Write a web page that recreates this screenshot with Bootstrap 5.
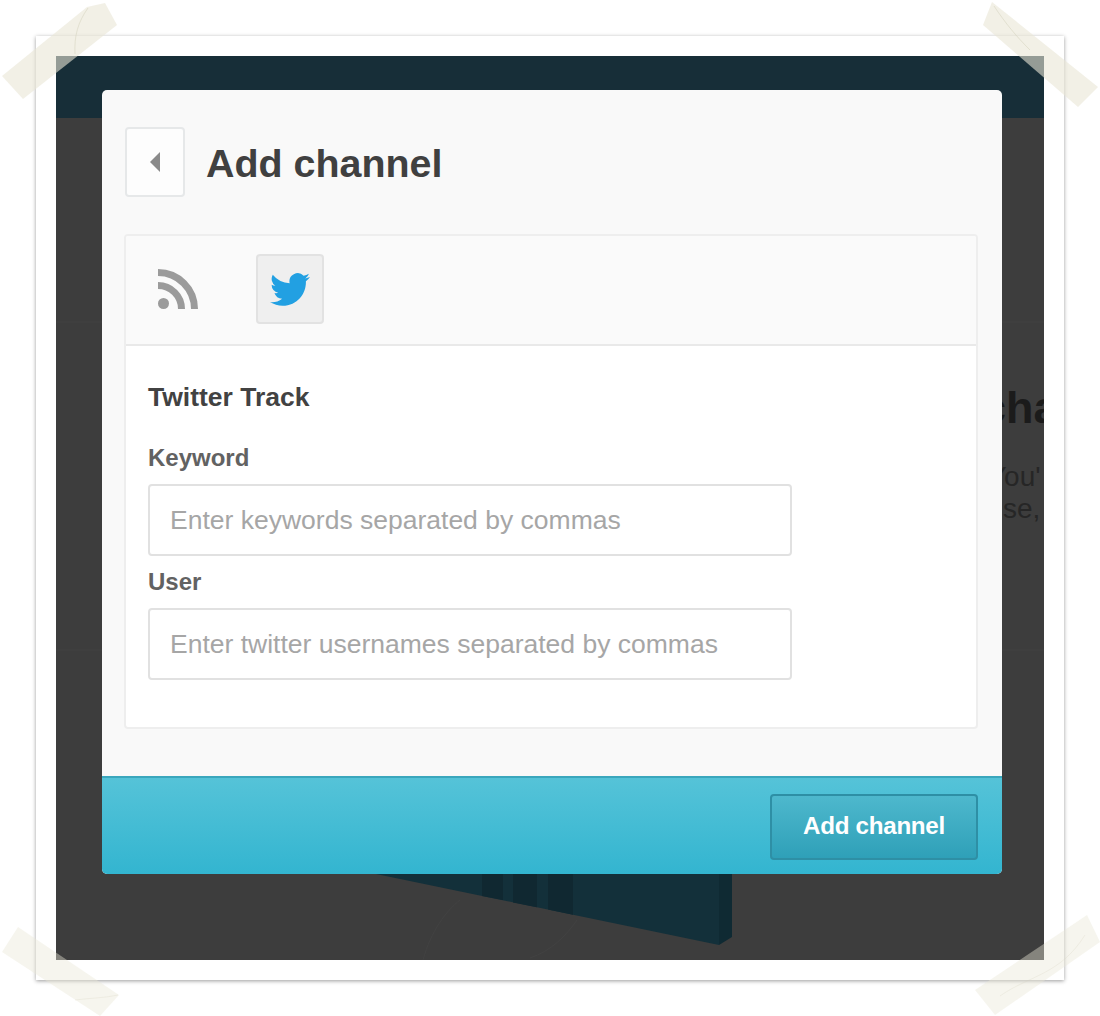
<!DOCTYPE html>
<html lang="en">
<head>
    <meta charset="UTF-8">
    <title>Add channel</title>
    <link href="https://cdn.jsdelivr.net/npm/bootstrap@5.3.0/dist/css/bootstrap.min.css" rel="stylesheet">
    <style>
        html, body { height: 100%; overflow: hidden; }
        body { background: #fff; font-family: "Liberation Sans", Arial, sans-serif; padding: 36px; }
        .photo-frame { position: relative; width: 1028px; height: 944px; padding: 20px; background: #fff; box-shadow: 0 1px 4px rgba(0,0,0,.4); }
        .photo-screen { position: relative; height: 904px; padding: 34px 42px 0 46px; background: #3d3d3d; overflow: hidden; }
        .top-strip { position: absolute; left: 0; right: 0; top: 0; height: 62px; background: #172e38; }
        .bg-art { position: absolute; left: 0; top: 0; width: 988px; height: 904px; }
        .bg-title { position: absolute; left: 925px; top: 327px; font-size: 45px; font-weight: 700; line-height: 50px; color: #1b1b1b; white-space: nowrap; }
        .bg-text { position: absolute; font-size: 28px; line-height: 32px; color: #262626; white-space: nowrap; }
        .bg-line-a { left: 932px; top: 405px; }
        .bg-line-b { left: 947px; top: 437px; }
        .dialog-box { position: relative; width: 900px; height: 784px; border: 0; border-radius: 5px; background: #f9f9f9; overflow: hidden; }
        .dialog-head { height: 144px; border: 0; padding: 37px 22px 37px 23px; gap: 21px; justify-content: flex-start; align-items: flex-start; }
        .back-btn { width: 60px; height: 70px; padding: 0; background: #fdfdfd; border: 2px solid #e6e8e9; border-radius: 4px; }
        .back-btn:hover { background: #fdfdfd; border-color: #e6e8e9; }
        .dialog-title { font-size: 39.4px; line-height: 72px; font-weight: 700; color: #404040; margin: 0; }
        .dialog-main { padding: 0 24px 0 22px; flex: none; height: 542px; }
        .channel-card { height: 495px; border: 2px solid #eeeeee; border-radius: 4px; background: #fff; }
        .channel-tabs { height: 110px; padding: 18px 0 0 18px; gap: 44px; background: #fafafa; border: 0; border-bottom: 2px solid #e9e9e9; border-radius: 2px 2px 0 0 !important; }
        .tab-item { width: 68px; height: 70px; border: 2px solid transparent; border-radius: 4px; }
        .tab-item.is-on { background: #efefef; border-color: #e2e2e2; }
        .channel-body { padding: 33px 22px 0; }
        .track-title { font-size: 26.5px; line-height: 36px; font-weight: 700; color: #424242; margin-bottom: 28px; }
        .field-label { font-size: 24px; line-height: 30px; font-weight: 700; color: #626262; margin-bottom: 11px; display: block; }
        .field-input { width: 644px; height: 72px; padding: 0 20px; margin-bottom: 11px; font-size: 26.5px; border: 2px solid #e1e1e1; border-radius: 4px; color: #444; }
        .field-input::placeholder { color: #a6a6a6; opacity: 1; }
        .dialog-foot { height: 98px; padding: 16px 24px 0 0; margin: 0; border: 0; border-top: 2px solid #3ba7bd; border-radius: 0; align-items: flex-start; background: linear-gradient(#55c3d8, #33b5d0); }
        .add-btn { width: 208px; height: 66px; margin: 0; padding: 0 0 2px; font-size: 24.2px; font-weight: 700; color: #fff; letter-spacing: -.3px; border: 2px solid #2e8fa5; border-radius: 4px; background: linear-gradient(#4eb8cd, #2fa0b8); }
        .add-btn:hover { color: #fff; background: linear-gradient(#4eb8cd, #2fa0b8); border-color: #2e8fa5; }
        .tape-layer { position: absolute; left: 0; top: 0; width: 1100px; height: 1016px; pointer-events: none; }
    </style>
</head>
<body>
    <div class="photo-frame">
        <div class="photo-screen">
            <div class="top-strip"></div>
            <svg class="bg-art" viewBox="0 0 988 904">
                <path d="M0 266H988M0 594H988" stroke="#434343" stroke-width="1"/>
                <path d="M320 818 663 889V818Z" fill="#13303a"/>
                <path d="M663 818H676V881L663 889Z" fill="#0f2a33"/>
                <path d="M426 818H447V844L426 840ZM457 818H481V851.300L457 846.400ZM492 818H517V858.800L492 853.600Z" fill="#102831"/>
                <path d="M367 904C375 875 390 855 404 844M474 902C495 895 510 880 521 864" fill="none" stroke="#424242" stroke-width="1"/>
            </svg>
            <div class="bg-title">cha</div>
            <div class="bg-text bg-line-a">You'</div>
            <div class="bg-text bg-line-b">se,</div>

            <div class="modal-content dialog-box">
                <div class="modal-header dialog-head">
                    <button class="btn back-btn d-flex align-items-center justify-content-center" type="button" aria-label="Back">
                        <svg width="10" height="20" viewBox="0 0 10 20"><path d="M10 0V20L0 10Z" fill="#8a8a8a"/></svg>
                    </button>
                    <h1 class="modal-title dialog-title">Add channel</h1>
                </div>
                <div class="modal-body dialog-main">
                    <div class="card channel-card">
                        <div class="card-header channel-tabs d-flex">
                            <div class="tab-item d-flex align-items-center justify-content-center">
                                <svg width="42" height="42" viewBox="0 0 42 42">
                                    <circle cx="6.5" cy="35.5" r="5.5" fill="#9b9b9b"/>
                                    <path d="M1 17.500A23.500 23.500 0 0 1 24.500 41M1 4.500A36.500 36.500 0 0 1 37.500 41" fill="none" stroke="#9b9b9b" stroke-width="7"/>
                                </svg>
                            </div>
                            <div class="tab-item is-on d-flex align-items-center justify-content-center">
                                <svg width="40" height="34" viewBox="0 0 16 13.4"><path transform="translate(0 -1.600)" d="M5.026 15c6.038 0 9.341-5.003 9.341-9.334 0-.14 0-.282-.006-.422A6.685 6.685 0 0 0 16 3.542a6.658 6.658 0 0 1-1.889.518 3.301 3.301 0 0 0 1.447-1.817 6.533 6.533 0 0 1-2.087.793A3.286 3.286 0 0 0 7.875 6.030a9.325 9.325 0 0 1-6.767-3.429 3.289 3.289 0 0 0 1.018 4.382A3.323 3.323 0 0 1 .64 6.575v.045a3.288 3.288 0 0 0 2.632 3.218 3.203 3.203 0 0 1-.865.115 3.230 3.230 0 0 1-.614-.057 3.283 3.283 0 0 0 3.067 2.277A6.588 6.588 0 0 1 .78 13.580a6.320 6.320 0 0 1-.78-.045A9.344 9.344 0 0 0 5.026 15z" fill="#22a0e2"/></svg>
                            </div>
                        </div>
                        <div class="card-body channel-body">
                            <h5 class="track-title">Twitter Track</h5>
                            <form>
                                <label class="field-label" for="kw">Keyword</label>
                                <input id="kw" class="form-control field-input" type="text" placeholder="Enter keywords separated by commas">
                                <label class="field-label" for="usr">User</label>
                                <input id="usr" class="form-control field-input" type="text" placeholder="Enter twitter usernames separated by commas">
                            </form>
                        </div>
                    </div>
                </div>
                <div class="modal-footer dialog-foot">
                    <button class="btn add-btn" type="button">Add channel</button>
                </div>
            </div>
        </div>
    </div>

    <svg class="tape-layer" viewBox="0 0 1100 1016">
        <g fill="#e9e6d6" fill-opacity=".6">
            <path d="M105 3 117 25 23 99 2 76 87 7Z"/>
            <path d="M992 2 983 25 1078 107 1098 87Z"/>
        </g>
        <g fill="#e9e6d6" fill-opacity=".42">
            <path d="M1087 915 1100 942 995 1015 975 990Z"/>
            <path d="M18 927 2 952 100 1016 119 995Z"/>
        </g>
        <path d="M88 8C78 22 74 36 75 54M994 6C1006 24 1016 36 1030 50" fill="none" stroke="#d2cfba" stroke-opacity=".5" stroke-width="1"/>
        <path d="M1000 996C1030 975 1060 975 1085 935M75 1000C90 998 105 998 118 995" fill="none" stroke="#d2cfba" stroke-opacity=".25" stroke-width="1"/>
    </svg>

    <script src="https://cdn.jsdelivr.net/npm/bootstrap@5.3.0/dist/js/bootstrap.bundle.min.js"></script>
</body>
</html>
